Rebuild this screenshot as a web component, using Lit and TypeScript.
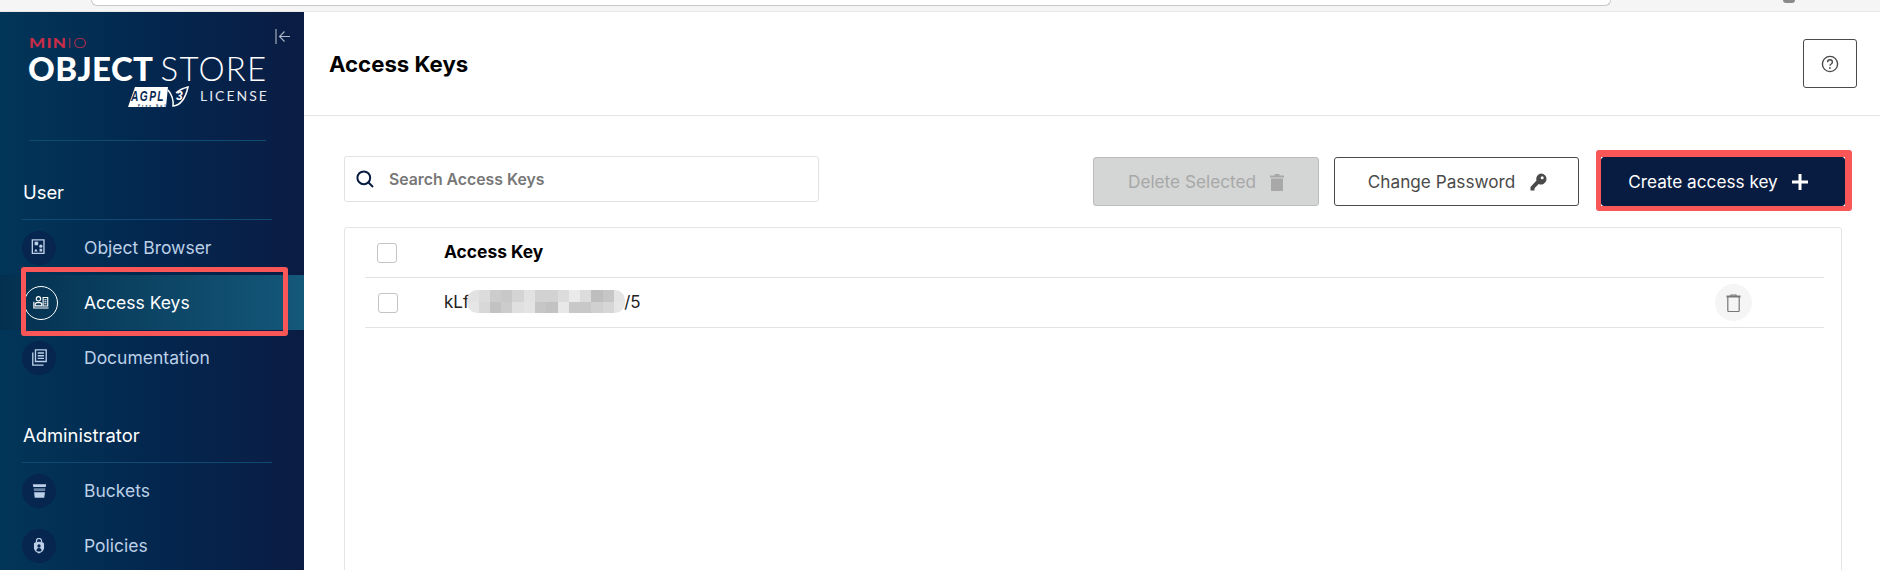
import {LitElement, html, css, svg} from 'lit';
import {customElement} from 'lit/decorators.js';

const icons = {
  browser: svg`<path d="M1.500 1h13v15h-13z" fill="none" stroke="currentColor" stroke-width="1.500"/><rect x="4" y="3" width="4" height="4" fill="currentColor"/><circle cx="11" cy="8" r="1.800" fill="currentColor"/><path d="M3.500 14l2-3.200 2 3.200zM9.500 11h3v3h-3z" fill="currentColor"/>`,
  keys: svg`<circle cx="6.500" cy="4.500" r="2.600" fill="none" stroke="currentColor" stroke-width="1.400"/><path d="M2.500 13v-1.500q0-2.500 2.500-2.500h3q2.500 0 2.500 2.500V13z" fill="none" stroke="currentColor" stroke-width="1.400"/><path d="M12 3h5.500v10H12z" fill="none" stroke="currentColor" stroke-width="1.300"/><path d="M13.500 5.500h2.500M13.500 8h2.500M13.500 10.500h2.500" stroke="currentColor" stroke-width="1.200"/><path d="M1 8v7.500h17.500" fill="none" stroke="currentColor" stroke-width="1.300"/>`,
  docs: svg`<path d="M5 1h12v13H5z" fill="none" stroke="currentColor" stroke-width="1.500"/><path d="M7.500 4.500h7M7.500 7.500h7M7.500 10.500h7" stroke="currentColor" stroke-width="1.500"/><path d="M2 4v14h12" fill="none" stroke="currentColor" stroke-width="1.500"/>`,
  buckets: svg`<path d="M2 2.500h15l-.6 3H2.600z" fill="currentColor"/><path d="M3 7h13l-.3 3H3.300z" fill="currentColor" opacity=".55"/><path d="M3.400 11.500h12.200l-.8 6H4.200z" fill="currentColor"/>`,
  policies: svg`<path fill-rule="evenodd" d="M9.500 4.500q5 0 6 2v6q-1 4-6 6-5-2-6-6v-6q1-2 6-2zM9.500 7.500a2 2 0 1 0 0 4 2 2 0 0 0 0-4zM6.500 15q3 2 6 0 0-3-3-3t-3 3z" fill="currentColor"/><path d="M6.500 5V3.500a3 3 0 0 1 6 0V5" fill="none" stroke="currentColor" stroke-width="1.500"/>`,
};

const iconSize = {browser: 17, keys: 16, docs: 17, buckets: 17, policies: 16};

const blurCells = [
  0xe2, 0xdc, 0xcc, 0xc8, 0xd4, 0xe2, 0xd2, 0xd2, 0xdc, 0xea, 0xdc, 0xbe, 0xc6, 0xe4,
  0xe6, 0xd8, 0xc2, 0xcc, 0xe0, 0xe4, 0xc6, 0xc2, 0xe8, 0xc8, 0xc8, 0xd0, 0xd6, 0xe6,
];

@customElement('app-root')
export class AppRoot extends LitElement {
  static styles = css`
    :host {
      display: block;
      width: 1880px;
      height: 570px;
      overflow: hidden;
      background: #fff;
      font-family: Inter, 'Liberation Sans', sans-serif;
    }
    .chrome {
      height: 11px;
      background: #f5f5f5;
      border-bottom: 1px solid #e8e8e8;
      padding-left: 91px;
      display: flex;
      align-items: flex-start;
    }
    .address {
      width: 1518px;
      height: 5px;
      background: #fff;
      border: 1px solid #c8c8c8;
      border-top: none;
      border-radius: 0 0 12px 12px;
    }
    .avatar {
      width: 12px;
      height: 3px;
      margin-left: 172px;
      background: #8a8a8a;
      border-radius: 0 0 6px 6px;
    }
    .shell {
      display: flex;
      height: 558px;
    }
    .sidebar {
      width: 304px;
      flex: none;
      background: linear-gradient(90deg, #023658 0%, #03274f 50%, #0b1c43 100%);
      overflow: hidden;
    }
    .brand {
      position: relative;
      height: 128px;
      padding: 24px 0 0 28px;
      box-sizing: border-box;
      color: #fff;
    }
    .collapse {
      position: absolute;
      left: 275px;
      top: 17px;
      color: #aeb8c8;
    }
    .minio {
      font-family: Lato, sans-serif;
      font-size: 14px;
      line-height: 14px;
      color: #c72c48;
      letter-spacing: 1px;
      transform: scaleX(1.22);
      transform-origin: left;
      font-weight: 900;
      margin-left: 1px;
    }
    .minio span {
      font-weight: 300;
    }
    .product {
      font-family: Lato, sans-serif;
      font-size: 33px;
      line-height: 34px;
      margin-top: 1px;
      white-space: nowrap;
      font-weight: 900;
      letter-spacing: 0.4px;
    }
    .product span {
      font-weight: 300;
      letter-spacing: 1.2px;
    }
    .license {
      display: flex;
      align-items: center;
      margin: -2px 0 0 100px;
      font-family: Lato, sans-serif;
      font-size: 14px;
      letter-spacing: 2px;
      gap: 11px;
      color: #e6ebf2;
    }
    .license svg {
      overflow: visible;
      margin-top: 4px;
    }
    .rule {
      height: 1px;
      margin: 0 38px 1px 29px;
      background: #0f4a70;
    }
    .heading {
      height: 78px;
      box-sizing: border-box;
      margin: 0 32px 0 22px;
      padding: 38px 0 0 1px;
      font-size: 18.4px;
      line-height: 24px;
      color: #fff;
      border-bottom: 1px solid #104a72;
    }
    .nav {
      position: relative;
      display: flex;
      align-items: center;
      height: 55px;
      padding-left: 22px;
      font-size: 17.5px;
      color: #bcd0e8;
    }
    .nav .dot {
      width: 34px;
      height: 34px;
      flex: none;
      box-sizing: border-box;
      border-radius: 50%;
      background: #06254f;
      margin-right: 28px;
      display: flex;
      align-items: center;
      justify-content: center;
    }
    .nav.active {
      color: #fff;
      background: linear-gradient(90deg, #04304f 0%, #14587a 100%);
    }
    .nav.active .dot {
      background: transparent;
      border: 1px solid #fff;
      margin-left: 2px;
      margin-right: 26px;
    }
    .nav.active::after {
      content: '';
      position: absolute;
      left: 21px;
      top: -8px;
      width: 267px;
      height: 69px;
      box-sizing: border-box;
      border: 5px solid #f95757;
      border-radius: 3px;
    }
    main {
      flex: 1;
      min-width: 0;
    }
    header {
      height: 104px;
      box-sizing: border-box;
      border-bottom: 1px solid #e5e5e5;
      padding: 0 23px 0 25px;
      display: flex;
      align-items: center;
      justify-content: space-between;
    }
    h1 {
      margin: 0;
      font-size: 22.2px;
      font-weight: 700;
      color: #000;
    }
    .help {
      width: 54px;
      height: 49px;
      box-sizing: border-box;
      border: 1px solid #4a4a4a;
      border-radius: 3px;
      display: flex;
      align-items: center;
      justify-content: center;
      color: #4a4a4a;
    }
    .content {
      padding: 40px 35px 0 40px;
    }
    .toolbar {
      display: flex;
      justify-content: space-between;
      align-items: flex-start;
      margin-bottom: 21px;
    }
    .search {
      width: 475px;
      height: 46px;
      box-sizing: border-box;
      border: 1px solid #e2e2e2;
      border-radius: 3px;
      display: flex;
      align-items: center;
      padding-left: 11px;
      gap: 15px;
      font-size: 15.8px;
      font-weight: 600;
      color: #777;
    }
    .actions {
      display: flex;
      gap: 15px;
      padding-top: 1px;
      height: 49px;
    }
    .btn {
      position: relative;
      height: 49px;
      box-sizing: border-box;
      border-radius: 3px;
      border: 1px solid #4a4a4a;
      display: flex;
      align-items: center;
      justify-content: center;
      gap: 14px;
      font-size: 17.2px;
      color: #4a4a4a;
    }
    .btn.delete {
      width: 226px;
      background: #d4d6d5;
      border-color: #bbbdbc;
      color: #a8a8a8;
    }
    .btn.change {
      width: 245px;
      padding-left: 2px;
    }
    .btn.create {
      width: 244px;
      background: #081c42;
      border-color: #081c42;
      color: #fff;
      margin-left: 7px;
      padding-right: 10px;
    }
    .btn.create::after {
      content: '';
      position: absolute;
      left: -6px;
      top: -8px;
      right: -8px;
      bottom: -6px;
      border-style: solid;
      border-color: #f95757;
      border-width: 7px 7px 5px 5px;
      border-radius: 3px;
    }
    .table {
      width: 1498px;
      height: 400px;
      box-sizing: border-box;
      border: 1px solid #e5e5e5;
      border-radius: 3px;
      padding: 0 17px 0 20px;
    }
    .row {
      display: flex;
      align-items: center;
      height: 50px;
      box-sizing: border-box;
      padding-bottom: 2px;
      border-bottom: 1px solid #e2e2e2;
      font-size: 17px;
      color: #222;
    }
    .row.head {
      font-size: 17.4px;
      font-weight: 700;
      color: #000;
    }
    .check {
      width: 20px;
      height: 20px;
      box-sizing: border-box;
      border: 1px solid #c4c4c4;
      border-radius: 3px;
      margin: 2px 47px 0 12px;
      flex: none;
    }
    .check.item {
      margin-left: 13px;
      margin-right: 46px;
    }
    .key {
      display: flex;
      align-items: center;
      flex: 1;
    }
    .mosaic {
      display: grid;
      grid-template-columns: repeat(14, 1fr);
      grid-template-rows: 1fr 1fr;
      width: 158px;
      height: 23px;
      border-radius: 10px;
      overflow: hidden;
      margin: 0 -1px 0 -2px;
    }
    .trash {
      width: 37px;
      height: 37px;
      border-radius: 50%;
      background: #f5f5f5;
      margin: 2px 72px 0 0;
      display: flex;
      align-items: center;
      justify-content: center;
      color: #777;
    }
  `;

  private navItem(label: string, icon: keyof typeof icons, active = false) {
    const size = iconSize[icon];
    return html`<div class="nav ${active ? 'active' : ''}">
      <span class="dot">
        <svg width=${size} height=${size} viewBox="0 0 19 19">${icons[icon]}</svg>
      </span>
      ${label}
    </div>`;
  }

  render() {
    return html`
      <div class="chrome"><div class="address"></div><div class="avatar"></div></div>
      <div class="shell">
        <aside class="sidebar">
          <div class="brand">
            <svg class="collapse" width="16" height="16" viewBox="0 0 16 16" fill="none" stroke="currentColor" stroke-width="1.100">
              <path d="M1 0v15M15 7.500H4.500M9.500 2.500l-5 5 5 5" />
            </svg>
            <div class="minio">MIN<span>IO</span></div>
            <div class="product">OBJECT <span>STORE</span></div>
            <div class="license">
              <svg width="61" height="20" viewBox="0 0 61 20">
                <path d="M0 20L7 0h33l-2 20z" fill="#fff" />
                <text x="3" y="14" font-family="Liberation Sans" font-size="14.500" font-style="italic" font-weight="700" fill="#0a2a52" textLength="34" lengthAdjust="spacingAndGlyphs">AGPL</text>
                <text x="10" y="20.300" font-family="Liberation Sans" font-size="3.400" font-weight="700" fill="#0a2a52">Free Software</text>
                <path d="M40 3q6 7 5 16 11-1 15-19-8 2-12 6" fill="none" stroke="#fff" stroke-width="1.500" />
                <text x="48" y="13" font-family="Liberation Sans" font-size="12" font-style="italic" font-weight="700" fill="#fff">3</text>
              </svg>
              LICENSE
            </div>
          </div>
          <div class="rule"></div>
          <div class="heading">User</div>
          ${this.navItem('Object Browser', 'browser')}
          ${this.navItem('Access Keys', 'keys', true)}
          ${this.navItem('Documentation', 'docs')}
          <div class="heading">Administrator</div>
          ${this.navItem('Buckets', 'buckets')}
          ${this.navItem('Policies', 'policies')}
        </aside>
        <main>
          <header>
            <h1>Access Keys</h1>
            <div class="help">
              <svg width="18" height="18" viewBox="0 0 18 18" fill="none" stroke="currentColor" stroke-width="1.400">
                <circle cx="9" cy="9" r="7.600" />
                <path d="M6.600 7.200q0-2.400 2.400-2.400t2.400 2.200q0 1.300-1.200 2-1.200.7-1.200 1.800" />
                <circle cx="8.900" cy="13" r=".9" fill="currentColor" stroke="none" />
              </svg>
            </div>
          </header>
          <div class="content">
            <div class="toolbar">
              <div class="search">
                <svg width="18" height="18" viewBox="0 0 18 18" fill="none" stroke="#081c42" stroke-width="2">
                  <circle cx="7.800" cy="7.800" r="6.400" />
                  <path d="M12.500 12.500l4.500 4.500" />
                </svg>
                Search Access Keys
              </div>
              <div class="actions">
                <div class="btn delete">
                  Delete Selected
                  <svg width="14" height="18" viewBox="0 0 14 18" fill="currentColor">
                    <path d="M0 2.500h4.500V1h5v1.500H14v2H0zM1 5.500h12V18H1z" />
                  </svg>
                </div>
                <div class="btn change">
                  Change Password
                  <svg width="18" height="18" viewBox="0 0 18 18" fill="currentColor">
                    <path fill-rule="evenodd" d="M12 .5a5.500 5.500 0 1 1-2.300 10.500L5.500 15.200V17.500H1.500v-3.500l6-6.400A5.500 5.500 0 0 1 12 .5zM13.200 3.200a1.500 1.500 0 1 0 0 3 1.500 1.500 0 0 0 0-3z" />
                  </svg>
                </div>
                <div class="btn create">
                  Create access key
                  <svg width="16" height="16" viewBox="0 0 16 16" fill="currentColor">
                    <path d="M6.500 0h3v6.500H16v3H9.500V16h-3V9.500H0v-3h6.500z" />
                  </svg>
                </div>
              </div>
            </div>
            <div class="table">
              <div class="row head">
                <span class="check"></span>
                <span class="key">Access Key</span>
              </div>
              <div class="row">
                <span class="check item"></span>
                <span class="key">
                  kLf
                  <span class="mosaic">
                    ${blurCells.map((v) => html`<i style="background:rgb(${v},${v},${v})"></i>`)}
                  </span>
                  /5
                </span>
                <span class="trash">
                  <svg width="15" height="18" viewBox="0 0 15 18" fill="none" stroke="currentColor" stroke-width="1.200">
                    <path d="M.5 2.500h14" stroke-width="2" />
                    <path d="M5 2.500V1h5v1.500M1.800 3v13.500q0 1 1 1h9.400q1 0 1-1V3" />
                  </svg>
                </span>
              </div>
            </div>
          </div>
        </main>
      </div>
    `;
  }
}
